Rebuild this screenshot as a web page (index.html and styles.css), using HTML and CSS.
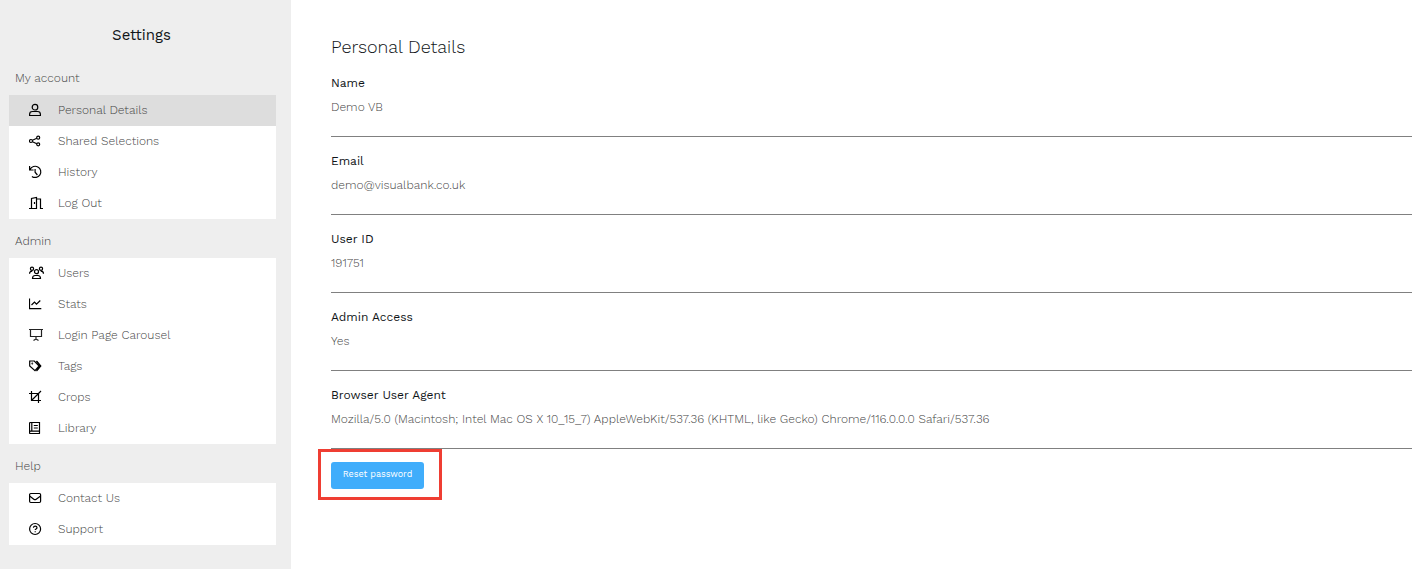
FILE: index.html
```html
<!DOCTYPE html>
<html lang="en">
<head>
<meta charset="utf-8">
<meta name="viewport" content="width=device-width, initial-scale=1">
<title>Settings</title>
<link rel="stylesheet" href="styles.css">
</head>
<body>
<div class="layout">
  <aside class="sidebar">
    <h1 class="sidebar-title">Settings</h1>
    <nav>
      <h2 class="group-title">My account</h2>
      <ul class="menu">
        <li><a class="menu-link active" href="#personal" aria-current="page"><svg class="icon" viewBox="0 0 16 16"><circle cx="6" cy="5.2" r="2.8"/><path d="M.6 13.5v-1.2c0-1.7 1.3-2.8 2.8-2.8h5.2c1.5 0 2.8 1.1 2.8 2.8v1.2z"/></svg>Personal Details</a></li>
        <li><a class="menu-link" href="#shared"><svg class="icon" viewBox="0 0 16 16"><circle cx="2" cy="8" r="1.5"/><circle cx="9.2" cy="4.7" r="1.5"/><circle cx="9.2" cy="11.3" r="1.5"/><path d="M3.5 7.3l4.3-2M3.5 8.7l4.3 2"/></svg>Shared Selections</a></li>
        <li><a class="menu-link" href="#history"><svg class="icon" viewBox="0 0 16 16"><path d="M.6 2v4h4M1.1 5.5A5.6 5.6 0 1 1 2.9 12.4M6.1 5v3.2L8.4 11"/></svg>History</a></li>
        <li><a class="menu-link" href="#logout"><svg class="icon" viewBox="0 0 16 16"><path d="M0 13.5h2.5V3.5L7.5 2.5v11h-5M7.5 4h4v9.5H14M5.5 7v2"/></svg>Log Out</a></li>
      </ul>
      <h2 class="group-title">Admin</h2>
      <ul class="menu">
        <li><a class="menu-link" href="#users"><svg class="icon" viewBox="0 0 16 16"><circle cx="3" cy="3.8" r="1.6"/><circle cx="12" cy="3.8" r="1.6"/><circle cx="7.5" cy="6.7" r="2"/><path d="M.5 8.8c0-1.6 1-2.6 2.8-2.6M14.5 8.8c0-1.6-1-2.6-2.8-2.6M3.5 13.5c0-2 1.2-3 2.6-3h2.8c1.4 0 2.6 1 2.6 3z"/></svg>Users</a></li>
        <li><a class="menu-link" href="#stats"><svg class="icon" viewBox="0 0 16 16"><path d="M.5 2.5v10.2h11.8M2.5 9l3-3 2 2.2 3.8-3.7"/></svg>Stats</a></li>
        <li><a class="menu-link" href="#carousel"><svg class="icon icon-soft" viewBox="0 0 16 16"><path d="M0 2.5h14M1.5 2.5v7h11v-7M7 9.5v3M4.5 13.5L7 12l2.5 1.5"/></svg>Login Page Carousel</a></li>
        <li><a class="menu-link" href="#tags"><svg class="icon" viewBox="0 0 16 16"><path d="M.7 3h4.6l4.8 5-4.1 4.6L.7 8zM7.5 3l4.3 5-4.3 5"/><path d="M7.5 3.4l3.8 4.6-3 3.6"/><circle cx="3.3" cy="5.5" r=".3"/></svg>Tags</a></li>
        <li><a class="menu-link" href="#crops"><svg class="icon" viewBox="0 0 16 16"><path d="M0 4.5h9.5V14M2.5 2v9.5H12M2.5 11.5L12 2"/></svg>Crops</a></li>
        <li><a class="menu-link" href="#library"><svg class="icon" viewBox="0 0 16 16"><path d="M10.5 11V2.5h-9c-.6 0-1 .4-1 1v9c0 .6.4 1 1 1H11M.5 12c0-.4.4-.9 1-.9H11M10.5 11v2.5M2.8 2.5V11M4.8 5.5h4M4.8 8h4"/></svg>Library</a></li>
      </ul>
      <h2 class="group-title">Help</h2>
      <ul class="menu">
        <li><a class="menu-link" href="#contact"><svg class="icon" viewBox="0 0 16 16"><rect x=".6" y="3.5" width="11" height="9" rx="1.2"/><path d="M.6 6l4.2 3.2c.8.6 1.6.6 2.4 0L11.6 6"/></svg>Contact Us</a></li>
        <li><a class="menu-link" href="#support"><svg class="icon" viewBox="0 0 16 16"><circle cx="6.1" cy="8" r="5.5"/><path d="M4.4 6.7c.1-1 .8-1.5 1.8-1.5s1.8.6 1.8 1.5c0 1.2-1.8 1.2-1.8 2.3M6.2 10.3v.9"/></svg>Support</a></li>
      </ul>
    </nav>
  </aside>
  <main class="content">
    <h2 class="content-title">Personal Details</h2>
    <dl class="details">
      <div class="detail"><dt>Name</dt><dd>Demo VB</dd></div>
      <div class="detail"><dt>Email</dt><dd>demo@visualbank.co.uk</dd></div>
      <div class="detail"><dt>User ID</dt><dd>191751</dd></div>
      <div class="detail"><dt>Admin Access</dt><dd>Yes</dd></div>
      <div class="detail"><dt>Browser User Agent</dt><dd>Mozilla/5.0 (Macintosh; Intel Mac OS X 10_15_7) AppleWebKit/537.36 (KHTML, like Gecko) Chrome/116.0.0.0 Safari/537.36</dd></div>
    </dl>
    <div class="callout"><button class="button" type="button">Reset password</button></div>
  </main>
</div>
</body>
</html>
```
FILE: styles.css
```css
* { box-sizing: border-box; }
body {
  margin: 0;
  background: #fff;
  color: #111518;
  font: 300 12px/24px "Work Sans", Inter, "Liberation Sans", sans-serif;
}
h1, h2, ul, dl, dd { margin: 0; padding: 0; }
.layout { display: flex; min-height: 100vh; }
.sidebar {
  flex: 0 0 291px;
  padding: 23px 15px 24px 9px;
  background: #eee;
}
.sidebar-title {
  margin-bottom: 14px;
  padding-right: 2px;
  text-align: center;
  font-size: 15px;
  font-weight: 400;
  line-height: 24px;
}
.group-title {
  padding: 5px 6px;
  color: #444;
  font-size: 12px;
  font-weight: 300;
  line-height: 24px;
}
.menu + .group-title { padding-top: 10px; }
.menu { list-style: none; background: #fff; }
.menu-link {
  display: flex;
  align-items: center;
  gap: 13px;
  height: 31px;
  padding: 0 0 2px 20px;
  color: #444;
  text-decoration: none;
}
.menu-link.active { background: #ddd; }
.icon {
  width: 16px;
  height: 16px;
  fill: none;
  stroke: #000;
  stroke-width: 1.2;
}
.icon-soft { stroke: #222; }
.content { flex: 1; min-width: 0; padding: 35px 0 0 40px; }
.content-title { font-size: 18px; font-weight: 300; line-height: 24px; }
.detail { padding: 12px 0 17px; border-bottom: 1px solid #808080; }
.detail dt { font-weight: 400; line-height: 24px; }
.detail dd { color: #444; line-height: 24px; }
.callout { position: relative; width: fit-content; margin-top: 13px; }
.callout::after {
  content: "";
  position: absolute;
  inset: -13px -18px -11px -13px;
  border: 3px solid #ef3e33;
  pointer-events: none;
}
.button {
  display: block;
  min-width: 93px;
  padding: 0 10px 2px;
  border: 0;
  border-radius: 3px;
  background: #40adfb;
  color: #fff;
  font: inherit;
  font-size: 9px;
  font-weight: 400;
  line-height: 25px;
}
```
